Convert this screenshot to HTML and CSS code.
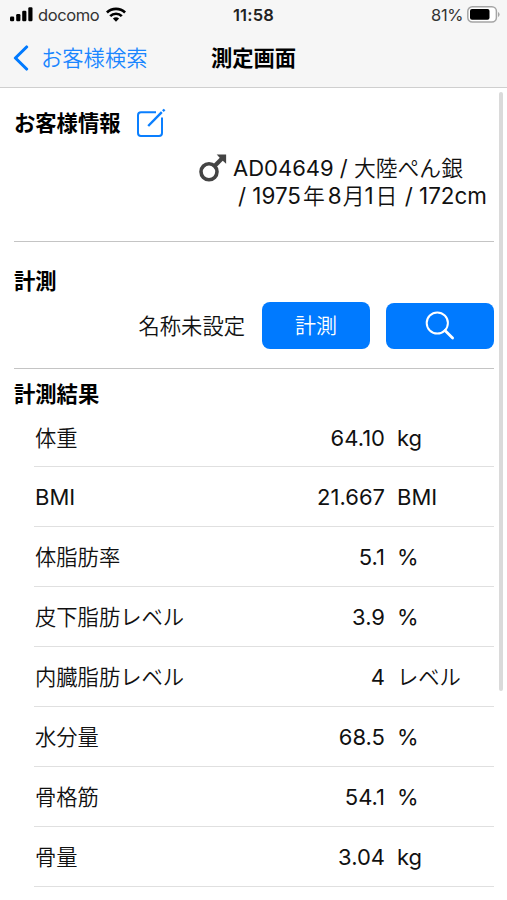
FILE: index.html
```
<!DOCTYPE html>
<html lang="ja">
<head>
<meta charset="UTF-8" />
<meta name="viewport" content="width=device-width, initial-scale=1" />
<title>測定画面</title>
<link rel="stylesheet" href="styles.css">
</head>
<body>

<header class="top">
  <div class="status">
    <div class="carrier">
      <svg width="23" height="15" viewBox="0 0 23 15">
        <rect x="0" y="9.5" width="4.2" height="4.8" rx="1.2"/>
        <rect x="6.2" y="7" width="4.2" height="7.3" rx="1.2"/>
        <rect x="12.2" y="3.8" width="4.2" height="10.5" rx="1.2"/>
        <rect x="18.3" y="0.2" width="4.2" height="14.1" rx="1.2"/>
      </svg>
      <span class="carrier-name">docomo</span>
      <svg class="wifi" width="20" height="15" viewBox="0 0 20 15" fill="none" stroke="#000" stroke-width="2.7">
        <path d="M.9 5.5a13 13 0 0 1 18.2 0"/>
        <path d="M4.2 9.1a8.3 8.3 0 0 1 11.6 0"/>
        <path d="M6.9 11.6a4.5 4.5 0 0 1 6.2 0L10 14.7z" fill="#000" stroke="none"/>
      </svg>
    </div>
    <div class="time">11:58</div>
    <div class="battery">
      <span>81%</span>
      <svg width="33" height="17" viewBox="0 0 33 17">
        <rect x=".8" y=".8" width="28.6" height="15.2" rx="4.5" fill="#fff" stroke="#a5a5a5" stroke-width="1.5"/>
        <rect x="3" y="3" width="19.5" height="10.8" rx="2" fill="#000"/>
        <path d="M31 6v5q1.6-.7 1.6-2.5T31 6z" fill="#a5a5a5"/>
      </svg>
    </div>
  </div>
  <nav class="nav">
    <a class="back" href="#">
      <svg width="16" height="26" viewBox="0 0 16 26" fill="none" stroke="#007aff" stroke-width="3.1" stroke-linecap="round" stroke-linejoin="round">
        <path d="M13.6 2L2.4 13l11.2 11"/>
      </svg>
      <span>お客様検索</span>
    </a>
    <h1>測定画面</h1>
  </nav>
</header>

<main>
  <section class="customer">
    <div class="customer-head">
      <h2>お客様情報</h2>
      <svg width="30" height="30" viewBox="0 0 30 30" fill="none" stroke="#0a7fff" stroke-width="2">
        <path d="M20 4.2H5a3 3 0 0 0-3 3V25a3 3 0 0 0 3 3h18a3 3 0 0 0 3-3V9.5"/>
        <path d="M12.2 18L25.8 4.2" stroke-width="2.4"/>
        <path d="M26.9 3.2l1.7-1.7" stroke-width="2.4"/>
      </svg>
    </div>
    <div class="customer-info">
      <svg width="30" height="30" viewBox="0 0 30 30" fill="none" stroke="#444" stroke-width="3.6">
        <circle cx="11" cy="18.8" r="8"/>
        <path d="M16.6 13L24 5.6" stroke-width="4.2"/>
        <path d="M18.7 1.4h9.4v9.4l-3.3-3-3.1-3.1z" fill="#444" stroke="none"/>
      </svg>
      <div class="lines">
        <div class="line1">AD04649 / <span class="ja">大陸ぺん銀</span></div>
        <div class="line2">/ 1975<span class="ja year">年</span>8<span class="ja month">月</span>1<span class="ja day">日</span> / 172cm</div>
      </div>
    </div>
  </section>

  <section class="measure">
    <h2>計測</h2>
    <div class="measure-row">
      <span class="device">名称未設定</span>
      <button class="btn">計測</button>
      <button class="btn btn-search">
        <svg width="30" height="30" viewBox="0 0 30 30" fill="none" stroke="#fff" stroke-width="2" stroke-linecap="round">
          <circle cx="12.3" cy="12" r="10.6"/>
          <path d="M20 19.6l7.6 7.4" stroke-width="2.8"/>
        </svg>
      </button>
    </div>
  </section>

  <section class="results">
    <h2>計測結果</h2>
    <ul>
      <li><span class="name">体重</span><span class="value">64.10</span><span class="unit">kg</span></li>
      <li><span class="name latin">BMI</span><span class="value">21.667</span><span class="unit">BMI</span></li>
      <li><span class="name">体脂肪率</span><span class="value">5.1</span><span class="unit">%</span></li>
      <li><span class="name">皮下脂肪レベル</span><span class="value">3.9</span><span class="unit">%</span></li>
      <li><span class="name">内臓脂肪レベル</span><span class="value">4</span><span class="unit unit-ja">レベル</span></li>
      <li><span class="name">水分量</span><span class="value">68.5</span><span class="unit">%</span></li>
      <li><span class="name">骨格筋</span><span class="value">54.1</span><span class="unit">%</span></li>
      <li><span class="name">骨量</span><span class="value">3.04</span><span class="unit">kg</span></li>
    </ul>
  </section>
</main>

<div class="scrollbar"></div>

</body>
</html>
```
FILE: styles.css
```
* {
  box-sizing: border-box;
}
body {
  margin: 0;
  height: 900px;
  overflow: hidden;
  position: relative;
  background-color: #fff;
  color: #111;
  font-family: Inter, 'Noto Sans CJK JP', sans-serif;
  font-size: 22px;
}
h1, h2 {
  margin: 0;
  font-size: 21.3px;
  font-weight: 700;
  line-height: 30px;
  color: #000;
}
svg {
  display: block;
  flex: none;
}

/* header */
.top {
  height: 88px;
  background-color: #f6f6f6;
  border-bottom: 1px solid #cfcfcf;
}
.status {
  display: grid;
  grid-template-columns: 1fr auto 1fr;
  align-items: center;
  height: 30px;
  padding: 0 7px 0 10px;
  font-size: 16.5px;
  color: #333;
}
.carrier, .battery {
  display: flex;
  align-items: center;
}
.carrier svg {
  margin-top: -1px;
}
.carrier-name {
  margin-left: 5px;
  letter-spacing: -0.4px;
}
.carrier .wifi {
  margin-left: 7px;
}
.time {
  margin-right: 3px;
  font-weight: 600;
  letter-spacing: 0.2px;
  color: #222;
}
.battery {
  justify-content: flex-end;
  gap: 4px;
}
.battery span {
  letter-spacing: -0.4px;
}
.battery svg {
  margin-top: -2px;
}
.nav {
  display: grid;
  grid-template-columns: 1fr auto 1fr;
  align-items: center;
  height: 57px;
  padding: 0 13px 1px;
}
.back {
  display: flex;
  align-items: center;
  gap: 12px;
  color: #1a86ff;
  font-size: 21.3px;
  font-weight: 350;
  text-decoration: none;
}
.back span {
  padding-bottom: 3px;
}

/* sections */
main {
  padding: 0 13px 0 14px;
}
.customer {
  height: 154px;
  padding-top: 20px;
  border-bottom: 1px solid #c4c4c4;
}
.customer-head {
  display: flex;
  align-items: center;
  gap: 15px;
}
.customer-info {
  display: flex;
  gap: 5px;
  margin-top: 16px;
  padding-left: 184px;
  line-height: 28px;
  white-space: nowrap;
}
.customer-info svg {
  margin-top: -1px;
}
.line2 {
  padding-left: 5px;
  font-size: 22.4px;
}
.ja {
  font-size: 21.8px;
  font-weight: 350;
}
.year {
  margin: 0 3px 0 2px;
}
.month {
  margin-left: 1px;
}
.day {
  margin: 0 1px 0 2px;
}
.measure {
  height: 127px;
  padding-top: 24px;
  border-bottom: 1px solid #c4c4c4;
}
.measure-row {
  display: flex;
  justify-content: flex-end;
  align-items: center;
  gap: 16px;
  margin-top: 6px;
}
.device {
  font-size: 21.3px;
  font-weight: 350;
  margin-right: 1px;
  padding-bottom: 3px;
}
.btn {
  display: flex;
  justify-content: center;
  align-items: center;
  width: 108px;
  height: 47px;
  padding: 0 0 3px;
  border: 0;
  border-radius: 8px;
  background-color: #007aff;
  color: #fff;
  font-family: inherit;
  font-size: 21px;
  font-weight: 350;
}
.btn-search {
  height: 46px;
  margin-top: 1px;
  padding: 0;
}

/* results */
.results {
  padding-top: 10px;
}
.results ul {
  margin: 0 0 0 20px;
  padding: 0;
  list-style: none;
}
.results li {
  display: grid;
  grid-template-columns: 1fr 160px 97px;
  column-gap: 12px;
  align-items: center;
  height: 60px;
  padding-left: 1px;
  border-bottom: 1px solid #e0e0e0;
}
.results li:first-child {
  height: 58px;
}
.name, .unit-ja {
  padding-bottom: 2px;
  font-size: 21.3px;
  font-weight: 350;
}
.name.latin {
  padding: 0;
  font-size: 22px;
  font-weight: 400;
}
.value {
  text-align: right;
}

.scrollbar {
  position: absolute;
  top: 92px;
  right: 4px;
  width: 4px;
  height: 599px;
  border-radius: 2px;
  background-color: #dadada;
}
```
